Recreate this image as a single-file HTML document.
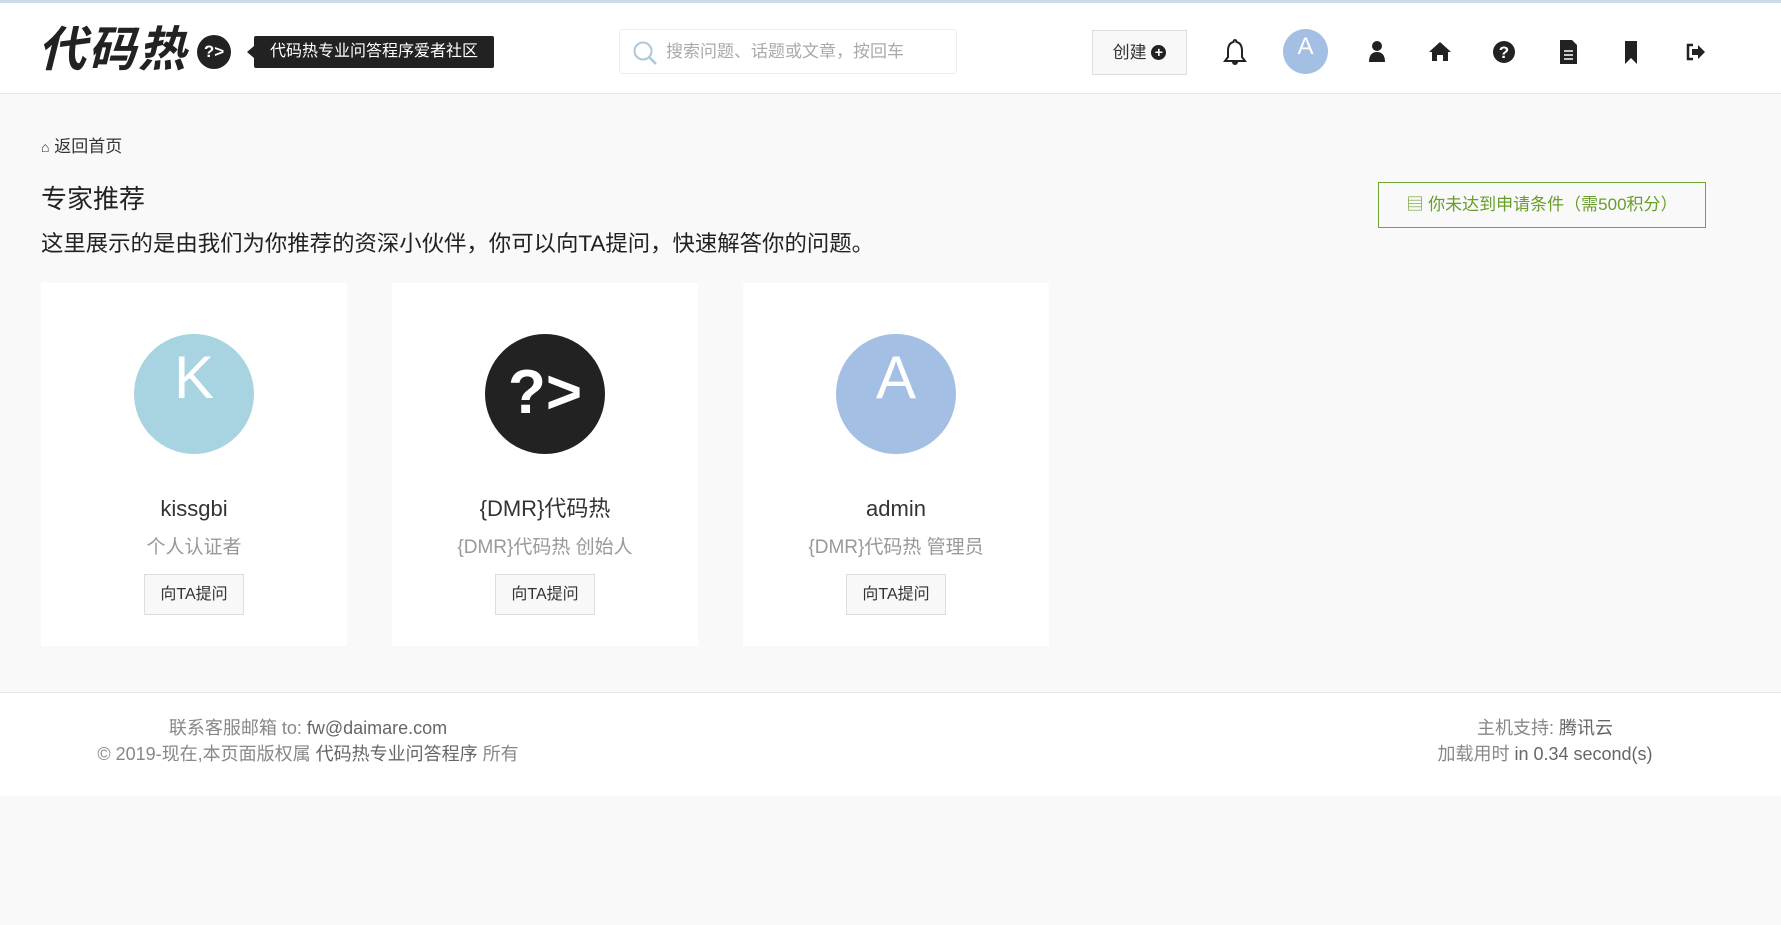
<!DOCTYPE html>
<html><head><meta charset="utf-8"><style>
*{box-sizing:border-box;margin:0;padding:0}
body{width:1781px;height:925px;background:#f9f9f9;font-family:"Liberation Sans","Noto Sans CJK SC",sans-serif;color:#333;position:relative;overflow:hidden}
.abs{position:absolute}
.hdr{position:absolute;left:0;top:0;width:1781px;height:94px;background:#fff;border-top:3px solid #c9dde9;border-bottom:1px solid #e5e5e5}
.logo{left:38px;top:20px;font-size:48px;font-weight:bold;font-style:italic;color:#222;letter-spacing:2px;line-height:56px}
.qlogo{left:197px;top:32px;width:34px;height:34px;border-radius:50%;background:#222;color:#fff;font-size:17px;font-weight:bold;text-align:center;line-height:34px}
.tip{left:254px;top:33px;width:240px;height:32px;background:#222;color:#fff;font-size:16px;line-height:32px;text-align:center;border-radius:2px}
.tip:before{content:"";position:absolute;left:-7px;top:10px;border:6px solid transparent;border-right:7px solid #222;border-left:0}
.search{left:619px;top:26px;width:338px;height:45px;border:1px solid #eee;border-radius:3px;background:#fff;font-size:17px;color:#aaa;line-height:43px;padding-left:46px}
.btn{left:1092px;top:27px;width:95px;height:45px;border:1px solid #ddd;background:#f8f8f8;font-size:17px;line-height:43px;text-align:center;color:#333}
.ic{top:34px;width:30px;height:30px}
.card{top:283px;width:306px;height:363px;background:#fff;text-align:center}
.av{width:120px;height:120px;border-radius:50%;margin:51px auto 0;color:#fff;font-size:60px;line-height:88px}
.nm{font-size:22px;color:#333;margin-top:40px;line-height:30px}
.sub{font-size:19px;color:#999;margin-top:10px;line-height:28px}
.ask{display:inline-block;margin-top:12px;width:100px;height:41px;border:1px solid #ddd;background:#f8f8f8;font-size:16px;line-height:39px;color:#333}
.foot{left:0;top:692px;width:1781px;height:104px;background:#fff;border-top:1px solid #e5e5e5;font-size:18px;color:#888;line-height:26px}
.foot b{font-weight:normal;color:#666}
</style></head><body>
<div class="hdr">
<div class="abs logo">代码热</div>
<div class="abs qlogo">?&gt;</div>
<div class="abs tip">代码热专业问答程序爱者社区</div>
<div class="abs search"><svg class="abs" style="left:12px;top:10px" width="26" height="26" viewBox="0 0 26 26"><circle cx="11" cy="11" r="8.5" fill="none" stroke="#a8c8e0" stroke-width="2"/><path d="M17 17l7 7" stroke="#a8c8e0" stroke-width="2.5"/></svg>搜索问题、话题或文章，按回车</div>
<div class="abs btn">创建 <span style="display:inline-block;width:15px;height:15px;border-radius:50%;background:#222;color:#fff;font-size:14px;line-height:15px;font-weight:bold;vertical-align:1px">+</span></div>
<svg class="abs ic" style="left:1220px" viewBox="0 0 30 30"><path d="M15 3c-1 0-1.5 1-1.5 2C9 6 8 10 8 14v6l-3 4h20l-3-4v-6c0-4-1-8-5.5-9 0-1-.5-2-1.5-2z" fill="none" stroke="#222" stroke-width="2"/><path d="M12 25a3 3 0 006 0" fill="#222"/></svg>
<div class="abs" style="left:1283px;top:26px;width:45px;height:45px;border-radius:50%;background:#a3bfe3;color:#fff;font-size:24px;text-align:center;line-height:36px">A</div>
<svg class="abs ic" style="left:1362px" viewBox="0 0 30 30"><circle cx="15" cy="9" r="5" fill="#222"/><path d="M7 25c0-7 3-10 8-10s8 3 8 10z" fill="#222"/></svg>
<svg class="abs ic" style="left:1425px" viewBox="0 0 30 30"><path d="M4 15L15 5l11 10h-3v9h-5v-6h-6v6H7v-9z" fill="#222"/></svg>
<svg class="abs ic" style="left:1489px" viewBox="0 0 30 30"><circle cx="15" cy="15" r="11" fill="#222"/><text x="15" y="21" font-size="17" font-weight="bold" fill="#fff" text-anchor="middle" font-family="Liberation Sans">?</text></svg>
<svg class="abs ic" style="left:1553px" viewBox="0 0 30 30"><path d="M7 3h12l5 5v19H7z" fill="#222"/><path d="M11 14h9M11 18h9M11 22h9" stroke="#fff" stroke-width="1.5"/></svg>
<svg class="abs ic" style="left:1616px" viewBox="0 0 30 30"><path d="M9 4h12v23l-6-6-6 6z" fill="#222"/></svg>
<svg class="abs ic" style="left:1680px" viewBox="0 0 30 30"><path d="M13 8H8v14h5" fill="none" stroke="#222" stroke-width="2.5"/><path d="M12 12h6V8l7 7-7 7v-4h-6z" fill="#222"/></svg>
</div>
<div class="abs" style="left:41px;top:135px;font-size:17px;line-height:24px;color:#333"><span style="font-size:14px">&#8962;</span> 返回首页</div>
<div class="abs" style="left:41px;top:182px;font-size:26px;line-height:34px;color:#222">专家推荐</div>
<div class="abs" style="left:41px;top:229px;font-size:22.4px;line-height:30px;color:#222">这里展示的是由我们为你推荐的资深小伙伴，你可以向TA提问，快速解答你的问题。</div>
<div class="abs" style="left:1378px;top:182px;width:328px;height:46px;border:1px solid #6ea533;color:#6a9e2a;font-size:17px;line-height:44px;text-align:center">▤ 你未达到申请条件（需500积分）</div>
<div class="abs card" style="left:41px"><div class="av" style="background:#a8d4e2">K</div><div class="nm">kissgbi</div><div class="sub">个人认证者</div><div class="ask">向TA提问</div></div>
<div class="abs card" style="left:392px"><div class="av" style="background:#222;font-weight:bold;font-size:62px;line-height:118px">?&gt;</div><div class="nm">{DMR}代码热</div><div class="sub">{DMR}代码热 创始人</div><div class="ask">向TA提问</div></div>
<div class="abs card" style="left:743px"><div class="av" style="background:#a3bfe3">A</div><div class="nm">admin</div><div class="sub">{DMR}代码热 管理员</div><div class="ask">向TA提问</div></div>
<div class="abs foot">
<div class="abs" style="left:80px;top:22px;width:456px;text-align:center">联系客服邮箱 to: <b>fw@daimare.com</b><br>© 2019-现在,本页面版权属 <b>代码热专业问答程序</b> 所有</div>
<div class="abs" style="left:1410px;top:22px;width:270px;text-align:center">主机支持: <b>腾讯云</b><br>加载用时 <b>in 0.34 second(s)</b></div>
</div>
</body></html>
